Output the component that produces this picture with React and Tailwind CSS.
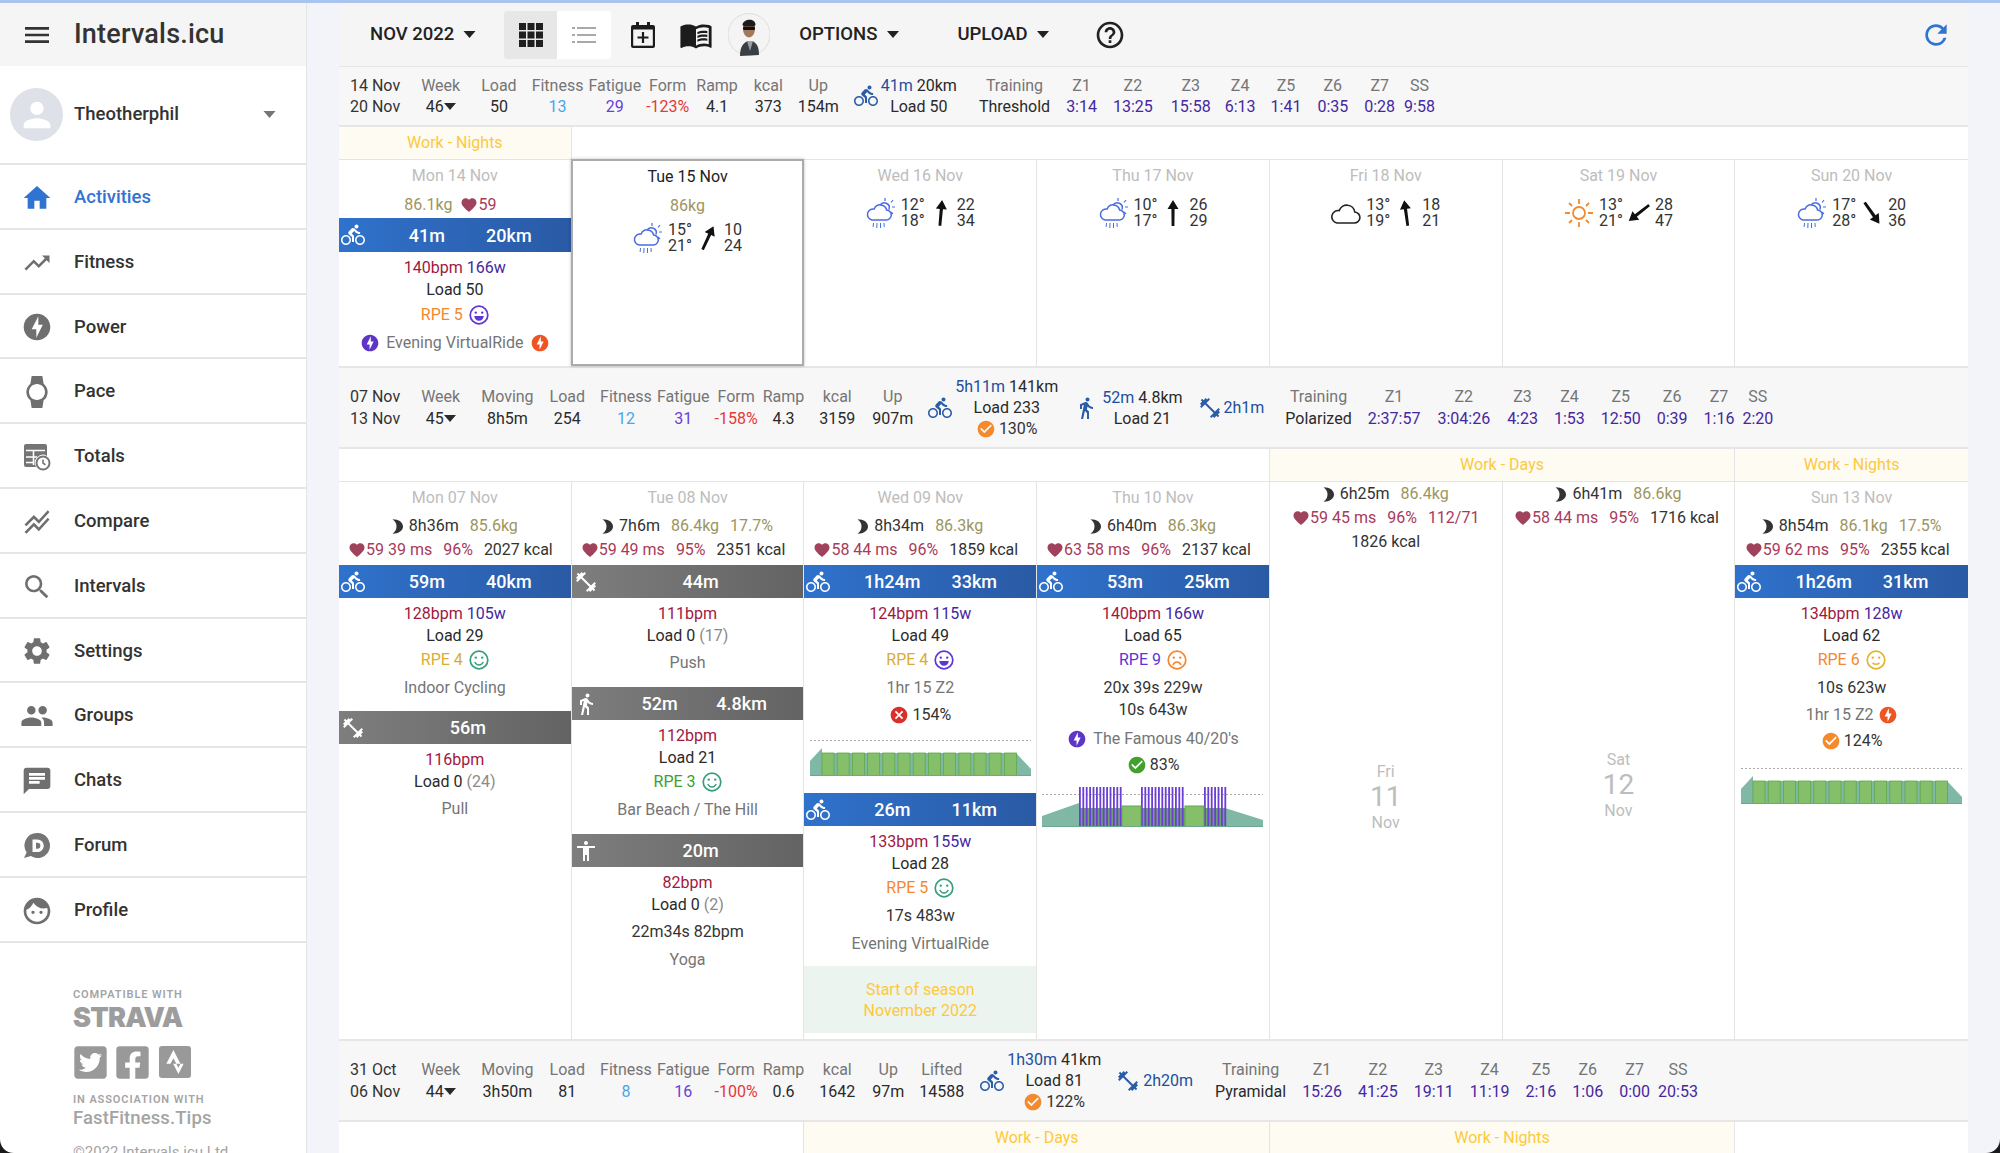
import React from 'react';
import {
  MdMenu, MdPerson, MdHome, MdTrendingUp, MdOfflineBolt, MdWatch, MdStackedLineChart, MdSearch, MdSettings,
  MdPeople, MdChat, MdFace, MdDirectionsBike, MdDirectionsWalk, MdFitnessCenter, MdAccessibility, MdFavorite,
  MdCheckCircle, MdCancel, MdMenuBook, MdHelpOutline, MdRefresh
} from 'react-icons/md';
import { FaTwitterSquare, FaFacebookSquare, FaStrava } from 'react-icons/fa';

const Caret = ({ className = '' }) => (
  <svg viewBox="0 0 12 7" className={className}><path d="M0 0h12L6 7z" fill="currentColor" /></svg>
);

const TotalsIcon = () => (
  <svg viewBox="0 0 28 28" className="w-[28px] h-[28px] text-[#757575]">
    <path d="M3 1h19a2 2 0 0 1 2 2v10a8 8 0 0 0-11 11H3a2 2 0 0 1-2-2V3a2 2 0 0 1 2-2z" fill="currentColor" />
    <path d="M3 7.5h19M3 14h11M3 19.5h8M10.5 8v14" stroke="#fff" strokeWidth="1.6" />
    <circle cx="20" cy="20" r="6.5" fill="none" stroke="currentColor" strokeWidth="2" />
    <path d="M20 16.5V20l2.5 1.8" fill="none" stroke="currentColor" strokeWidth="1.6" />
  </svg>
);

const ForumIcon = () => (
  <svg viewBox="0 0 28 28" className="w-[28px] h-[28px] text-[#757575]">
    <path d="M14.5 1a12.5 12.5 0 1 1-6.6 23.1L1 26l2.6-5.6A12.5 12.5 0 0 1 14.5 1z" fill="currentColor" />
    <path d="M9.5 7.5h5a6 6 0 0 1 0 12.6h-5zM13 10.8v6h1.4a3 3 0 0 0 0-6z" fill="#fff" fillRule="evenodd" />
  </svg>
);

const navItems = [
  { label: 'Activities', icon: <MdHome size={32} />, active: true },
  { label: 'Fitness', icon: <MdTrendingUp size={30} /> },
  { label: 'Power', icon: <MdOfflineBolt size={32} /> },
  { label: 'Pace', icon: <MdWatch size={32} /> },
  { label: 'Totals', icon: <TotalsIcon /> },
  { label: 'Compare', icon: <MdStackedLineChart size={30} /> },
  { label: 'Intervals', icon: <MdSearch size={32} /> },
  { label: 'Settings', icon: <MdSettings size={32} /> },
  { label: 'Groups', icon: <MdPeople size={34} /> },
  { label: 'Chats', icon: <MdChat size={32} /> },
  { label: 'Forum', icon: <ForumIcon /> },
  { label: 'Profile', icon: <MdFace size={32} /> }
];

const Sidebar = () => (
  <aside className="w-[307px] h-full bg-white shrink-0 border-r border-[#e4e4e4] flex flex-col overflow-hidden">
    <div className="h-[63px] shrink-0 bg-[#f5f5f5] flex items-center text-[#333]">
      <div className="w-[74px] flex justify-center"><MdMenu size={32} /></div>
      <span className="text-[27px] font-medium tracking-[0.2px]">Intervals.icu</span>
    </div>
    <div className="h-[99px] shrink-0 border-b-2 border-[#e5e5e5] flex items-center pl-[10px] pr-[30px]">
      <div className="w-[53px] h-[53px] rounded-full bg-[#dfe1e8] flex items-center justify-center text-white">
        <MdPerson size={40} />
      </div>
      <span className="ml-[11px] text-[18.5px] font-medium text-[#333]">Theotherphil</span>
      <Caret className="ml-auto w-[13px] h-[7px] text-[#757575]" />
    </div>
    {navItems.map((item) => (
      <div key={item.label} className="h-[64.8px] shrink-0 pt-[3px] border-b-2 border-[#e5e5e5] flex items-center">
        <div className={`w-[74px] flex justify-center ${item.active ? 'text-[#2f74d0]' : 'text-[#6f6f6f]'}`}>{item.icon}</div>
        <span className={`text-[18.5px] font-medium ${item.active ? 'text-[#3273d2]' : 'text-[#333]'}`}>{item.label}</span>
      </div>
    ))}
    <div className="shrink-0 pl-[73px] pt-[44px] text-[#a4a4a4]">
      <div className="h-[16px] leading-[16px] text-[11px] font-semibold tracking-[0.9px]">COMPATIBLE WITH</div>
      <div className="h-[26px] leading-[26px] text-[27px] font-['Inter',sans-serif] font-black tracking-[-0.8px] text-[#9d9d9d] mt-[2px]">STRAVA</div>
      <div className="flex mt-[13px] gap-[5px] text-[#999]">
        <FaTwitterSquare size={37} className="-ml-[1.5px]" />
        <FaFacebookSquare size={37} />
        <div className="w-[32px] h-[32px] mt-[2px] ml-[3.5px] rounded-[3px] bg-[#999] flex items-center justify-center text-white"><FaStrava size={24} /></div>
      </div>
      <div className="mt-[11px] h-[16px] leading-[16px] text-[11px] font-semibold tracking-[0.9px] whitespace-nowrap">IN ASSOCIATION WITH</div>
      <div className="h-[20px] leading-[20px] text-[18.5px] font-medium tracking-[0.1px] whitespace-nowrap">FastFitness.Tips</div>
      <div className="mt-[14px] text-[15px] leading-[20px] whitespace-nowrap">©2022 Intervals.icu Ltd</div>
    </div>
  </aside>
);

const Toolbar = () => (
  <div className="h-[63px] bg-[#f5f5f5] flex items-center pl-[31px] text-[#222]">
    <span className="text-[18.5px] font-medium">NOV 2022</span>
    <Caret className="ml-[9px] w-[13px] h-[7px]" />
    <div className="ml-[28px] flex">
      <div className="w-[53px] h-[48px] bg-[#e7e7e7] rounded-l-[3px] flex items-center justify-center">
        <svg viewBox="0 0 24 24" className="w-[24px] h-[24px]" fill="#1f1f1f">
          <rect x="0" y="0" width="7" height="7" /><rect x="8.5" y="0" width="7" height="7" /><rect x="17" y="0" width="7" height="7" />
          <rect x="0" y="8.5" width="7" height="7" /><rect x="8.5" y="8.5" width="7" height="7" /><rect x="17" y="8.5" width="7" height="7" />
          <rect x="0" y="17" width="7" height="7" /><rect x="8.5" y="17" width="7" height="7" /><rect x="17" y="17" width="7" height="7" />
        </svg>
      </div>
      <div className="w-[54px] h-[48px] bg-white rounded-r-[3px] flex items-center justify-center">
        <svg viewBox="0 0 24 18" className="w-[24px] h-[18px]" fill="#a9a9a9">
          <rect x="0" y="1" width="3" height="2" /><rect x="5" y="1" width="19" height="2" />
          <rect x="0" y="8" width="3" height="2" /><rect x="5" y="8" width="19" height="2" />
          <rect x="0" y="15" width="3" height="2" /><rect x="5" y="15" width="19" height="2" />
        </svg>
      </div>
    </div>
    <svg viewBox="0 0 24 26" className="ml-[20px] w-[24px] h-[26px]">
      <path d="M5 0h3v3h8V0h3v3h3a2 2 0 0 1 2 2v19a2 2 0 0 1-2 2H2a2 2 0 0 1-2-2V5a2 2 0 0 1 2-2h3z" fill="#1c1c1c" />
      <rect x="2.2" y="7.5" width="19.6" height="16.2" fill="#f5f5f5" />
      <path d="M12 10v11M6.5 15.5h11" stroke="#1c1c1c" strokeWidth="2.2" />
    </svg>
    <MdMenuBook size={34} className="ml-[24px] -mr-[2px] text-[#1c1c1c]" />
    <svg viewBox="0 0 42 43" className="ml-[17px] w-[42px] h-[43px]">
      <circle cx="21" cy="21.5" r="21" fill="#f4f4f4" stroke="#ddd" />
      <path d="M12 43c0-9 3-13 8-15l4 0c5 2 7 6 7 14z" fill="#3a3f44" />
      <path d="M19 28l3 10 3-10z" fill="#9aa0a5" />
      <ellipse cx="21" cy="16" rx="6" ry="8.5" fill="#a5785b" />
      <path d="M14.5 12c0-6 13-8 13 0l-1 1h-11z" fill="#1c1c1c" />
      <rect x="15" y="13.5" width="12" height="3.5" rx="1.2" fill="#111" />
    </svg>
    <span className="ml-[29px] text-[18.5px] font-medium">OPTIONS</span>
    <Caret className="ml-[10px] w-[12px] h-[7px]" />
    <span className="ml-[58px] text-[18.5px] font-medium">UPLOAD</span>
    <Caret className="ml-[9px] w-[12px] h-[7px]" />
    <MdHelpOutline size={32} className="ml-[45px]" />
    <MdRefresh size={32} className="ml-auto mr-[16px] text-[#2f74d0]" />
  </div>
);

const Stat = ({ label, value, color = 'text-[#2a2a2a]', className = '' }) => (
  <div className={`flex flex-col items-center whitespace-nowrap ${className}`}>
    <span className="h-[21.5px] leading-[21.5px] text-[#757575]">{label}</span>
    <span className={`h-[21.5px] leading-[21.5px] ${color}`}>{value}</span>
  </div>
);

const Dates = ({ from, to }) => (
  <div className="flex flex-col text-[#333] whitespace-nowrap">
    <span className="h-[21.5px] leading-[21.5px]">{from}</span>
    <span className="h-[21.5px] leading-[21.5px]">{to}</span>
  </div>
);

const WeekNo = ({ n }) => (
  <div className="ml-[21px] flex flex-col items-center">
    <span className="h-[21.5px] leading-[21.5px] text-[#757575]">Week</span>
    <span className="h-[21.5px] leading-[21.5px] text-[#2a2a2a] flex items-center">{n}<Caret className="w-[12px] h-[7px]" /></span>
  </div>
);

const ZoneStats = ({ name, nameGap, zones }) => (
  <>
    <Stat label="Training" value={name} className={nameGap} />
    {zones.map(([label, value, gap]) => (
      <Stat key={label} label={label} value={value} color="text-[#4527a0]" className={gap} />
    ))}
  </>
);

const Bike = ({ className = '' }) => <MdDirectionsBike size={24} className={`text-[#2a5ca8] ${className}`} />;
const Stretch = ({ className = '' }) => <MdFitnessCenter size={24} className={`text-[#2a5ca8] ${className}`} />;

const Badge = ({ type, className = '' }) => {
  if (type === 'orange') return <MdCheckCircle size={20} className={`text-[#f48a2c] ${className}`} />;
  if (type === 'green') return <MdCheckCircle size={20} className={`text-[#43a02e] ${className}`} />;
  return <MdCancel size={20} className={`text-[#d9302c] ${className}`} />;
};

const Week1 = () => (
  <div className="h-[58px] bg-[#f7f7f8] border-t border-[#e6e6e6] box-content flex items-center pl-[11px] text-[16px]">
    <Dates from="14 Nov" to="20 Nov" />
    <WeekNo n="46" />
    <Stat label="Load" value="50" className="ml-[21px]" />
    <Stat label="Fitness" value="13" color="text-[#4aa5e8]" className="ml-[15px]" />
    <Stat label="Fatigue" value="29" color="text-[#6a3fd6]" className="ml-[5px]" />
    <Stat label="Form" value="-123%" color="text-[#e53935]" className="ml-[5px]" />
    <Stat label="Ramp" value="4.1" className="ml-[7px]" />
    <Stat label="kcal" value="373" className="ml-[16px]" />
    <Stat label="Up" value="154m" className="ml-[15px]" />
    <Bike className="ml-[15px]" />
    <div className="ml-[3px] flex flex-col items-center whitespace-nowrap">
      <span className="h-[21.5px] leading-[21.5px]"><span className="text-[#1e4f9c]">41m</span> <span className="text-[#2a2a2a]">20km</span></span>
      <span className="h-[21.5px] leading-[21.5px] text-[#2a2a2a]">Load 50</span>
    </div>
    <ZoneStats
      name="Threshold"
      nameGap="ml-[22px]"
      zones={[
        ['Z1', '3:14', 'ml-[16px]'], ['Z2', '13:25', 'ml-[16px]'], ['Z3', '15:58', 'ml-[18px]'], ['Z4', '6:13', 'ml-[14px]'],
        ['Z5', '1:41', 'ml-[15px]'], ['Z6', '0:35', 'ml-[16px]'], ['Z7', '0:28', 'ml-[16px]'], ['SS', '9:58', 'ml-[9px]']
      ]}
    />
  </div>
);

const RideSummary = ({ time, dist, load, pct, className = '' }) => (
  <div className={`flex flex-col items-center whitespace-nowrap ${className}`}>
    <span className="h-[21px] leading-[21px]"><span className="text-[#1e4f9c]">{time}</span> <span className="text-[#2a2a2a]">{dist}</span></span>
    <span className="h-[21px] leading-[21px] text-[#2a2a2a]">{load}</span>
    {pct && <span className="h-[21px] flex items-center gap-[3px] text-[#333]"><Badge type="orange" />{pct}</span>}
  </div>
);

const Week2 = () => (
  <div className="h-[79px] bg-[#f7f7f8] border-t-2 border-[#e6e6e6] box-content flex items-center pl-[11px] text-[16px]">
    <Dates from="07 Nov" to="13 Nov" />
    <WeekNo n="45" />
    <Stat label="Moving" value="8h5m" className="ml-[21px]" />
    <Stat label="Load" value="254" className="ml-[16px]" />
    <Stat label="Fitness" value="12" color="text-[#4aa5e8]" className="ml-[15px]" />
    <Stat label="Fatigue" value="31" color="text-[#6a3fd6]" className="ml-[5px]" />
    <Stat label="Form" value="-158%" color="text-[#e53935]" className="ml-[5px]" />
    <Stat label="Ramp" value="4.3" className="ml-[5px]" />
    <Stat label="kcal" value="3159" className="ml-[15px]" />
    <Stat label="Up" value="907m" className="ml-[17px]" />
    <Bike className="ml-[15px]" />
    <RideSummary time="5h11m" dist="141km" load="Load 233" pct="130%" className="ml-[3px]" />
    <MdDirectionsWalk size={24} className="ml-[16px] text-[#2a5ca8]" />
    <RideSummary time="52m" dist="4.8km" load="Load 21" className="ml-[4px]" />
    <Stretch className="ml-[15px]" />
    <span className="ml-[2px] text-[#1e4f9c]">2h1m</span>
    <ZoneStats
      name="Polarized"
      nameGap="ml-[21px]"
      zones={[
        ['Z1', '2:37:57', 'ml-[16px]'], ['Z2', '3:04:26', 'ml-[17px]'], ['Z3', '4:23', 'ml-[17px]'], ['Z4', '1:53', 'ml-[16px]'],
        ['Z5', '12:50', 'ml-[16px]'], ['Z6', '0:39', 'ml-[16px]'], ['Z7', '1:16', 'ml-[16px]'], ['SS', '2:20', 'ml-[8px]']
      ]}
    />
  </div>
);

const Week3 = () => (
  <div className="h-[79px] bg-[#f7f7f8] border-t-2 border-[#e6e6e6] box-content flex items-center pl-[11px] text-[16px]">
    <Dates from="31 Oct" to="06 Nov" />
    <WeekNo n="44" />
    <Stat label="Moving" value="3h50m" className="ml-[21px]" />
    <Stat label="Load" value="81" className="ml-[16px]" />
    <Stat label="Fitness" value="8" color="text-[#4aa5e8]" className="ml-[15px]" />
    <Stat label="Fatigue" value="16" color="text-[#6a3fd6]" className="ml-[5px]" />
    <Stat label="Form" value="-100%" color="text-[#e53935]" className="ml-[5px]" />
    <Stat label="Ramp" value="0.6" className="ml-[5px]" />
    <Stat label="kcal" value="1642" className="ml-[15px]" />
    <Stat label="Up" value="97m" className="ml-[17px]" />
    <Stat label="Lifted" value="14588" className="ml-[15px]" />
    <Bike className="ml-[16px]" />
    <RideSummary time="1h30m" dist="41km" load="Load 81" pct="122%" className="ml-[3px]" />
    <Stretch className="ml-[15px]" />
    <span className="ml-[3px] text-[#1e4f9c]">2h20m</span>
    <ZoneStats
      name="Pyramidal"
      nameGap="ml-[22px]"
      zones={[
        ['Z1', '15:26', 'ml-[16px]'], ['Z2', '41:25', 'ml-[16px]'], ['Z3', '19:11', 'ml-[16px]'], ['Z4', '11:19', 'ml-[16px]'],
        ['Z5', '2:16', 'ml-[16px]'], ['Z6', '1:06', 'ml-[16px]'], ['Z7', '0:00', 'ml-[16px]'], ['SS', '20:53', 'ml-[8px]']
      ]}
    />
  </div>
);

const Phase = ({ text, className = '' }) => (
  <div className={`h-[32px] flex items-center justify-center border-r border-[#e4e4e4] ${text ? 'bg-[#fefbf3] text-[#fdc93b]' : ''} ${className}`}>{text}</div>
);

const Line = ({ className = 'h-[28px]', children }) => (
  <div className={`flex items-center justify-center whitespace-nowrap text-[16px] ${className}`}>{children}</div>
);

const DayHead = ({ text, dark }) => (
  <div className={`h-[32px] flex items-center justify-center text-[16px] ${dark ? 'text-[#222]' : 'text-[#bdbdbd]'}`}>{text}</div>
);

const Moon = () => (
  <svg viewBox="0 0 11 15" className="w-[11px] h-[15px]"><path d="M0.5 0.3C7 0.3 11 3.5 11 7.5S7 14.7 0.5 14.7C3.5 12.5 4.5 10 4.5 7.5S3.5 2.5 0.5 0.3z" fill="#333" /></svg>
);

const Sleep = ({ time, kg, pct, className = 'h-[24px]' }) => (
  <Line className={className}>
    <Moon />
    <span className="ml-[6px] text-[#333]">{time}</span>
    <span className="ml-[11px] text-[#9c955f]">{kg}</span>
    {pct && <span className="ml-[11px] text-[#9c955f]">{pct}</span>}
  </Line>
);

const Hrv = ({ hr, ms, pct, bp, kcal, className = 'h-[24px] pr-[9px]' }) => (
  <Line className={className}>
    <MdFavorite size={18} className="text-[#a0425c]" />
    <span className="text-[#a83b5a]">{hr} {ms}</span>
    <span className="ml-[11px] text-[#a83b5a]">{pct}</span>
    {bp && <span className="ml-[11px] text-[#a83b5a]">{bp}</span>}
    {kcal && <span className="ml-[11px] text-[#333]">{kcal}</span>}
  </Line>
);

const barKinds = {
  ride: { bg: 'bg-gradient-to-r from-[#2f72cc] to-[#2a5aa5]', icon: <MdDirectionsBike size={26} /> },
  gym: { bg: 'bg-gradient-to-r from-[#7e7e7e] to-[#636363]', icon: <MdFitnessCenter size={24} /> },
  walk: { bg: 'bg-gradient-to-r from-[#7e7e7e] to-[#636363]', icon: <MdDirectionsWalk size={24} /> },
  yoga: { bg: 'bg-gradient-to-r from-[#7e7e7e] to-[#636363]', icon: <MdAccessibility size={24} /> }
};

const ActivityBar = ({ kind, a, b, className = '' }) => (
  <div className={`h-[33px] flex items-center pl-[2px] text-white text-[18px] font-medium ${barKinds[kind].bg} ${className}`}>
    <span className="w-[24px] shrink-0 flex justify-center">{barKinds[kind].icon}</span>
    <div className="flex-1 flex justify-center">
      <span className="w-[82px] text-center">{a}</span>
      {b && <span className="w-[82px] text-center">{b}</span>}
    </div>
  </div>
);

const Metrics = ({ bpm, w, load, extra, className = 'pt-[5px]' }) => (
  <div className={className}>
    <Line className="h-[22px]">
      <span className="text-[#a0183f]">{bpm}</span>
      {w && <span className="ml-[4px] text-[#4527a0]">{w}</span>}
    </Line>
    <Line className="h-[21px] text-[#2a2a2a]">{load}{extra && <span className="ml-[4px] text-[#8a8a8a]">{extra}</span>}</Line>
  </div>
);

const Face = ({ mood, color }) => (
  <svg viewBox="0 0 20 20" className={`w-[20px] h-[20px] ml-[6px] ${color}`}>
    <circle cx="10" cy="10" r="8.8" fill="none" stroke="currentColor" strokeWidth="1.7" />
    <circle cx="6.8" cy="7.6" r="1.2" fill="currentColor" />
    <circle cx="13.2" cy="7.6" r="1.2" fill="currentColor" />
    {mood === 'laugh' && <path d="M5.2 11h9.6c-.4 3-2.3 4.8-4.8 4.8S5.6 14 5.2 11z" fill="currentColor" />}
    {mood === 'smile' && <path d="M5.8 12c1 2 2.4 3 4.2 3s3.2-1 4.2-3" fill="none" stroke="currentColor" strokeWidth="1.5" />}
    {mood === 'neutral' && <path d="M6.5 12.8c1.2 1 2.3 1.4 3.5 1.4s2.3-.4 3.5-1.4" fill="none" stroke="currentColor" strokeWidth="1.5" />}
    {mood === 'sad' && <path d="M5.8 15c1-2 2.4-3 4.2-3s3.2 1 4.2 3" fill="none" stroke="currentColor" strokeWidth="1.5" />}
  </svg>
);

const Rpe = ({ n, color, mood, faceColor, className = 'h-[28px]' }) => (
  <Line className={className}>
    <span className={color}>RPE {n}</span>
    <Face mood={mood} color={faceColor} />
  </Line>
);

const Note = ({ children, gray, className = 'h-[28px]' }) => (
  <Line className={`${className} ${gray ? 'text-[#757575]' : 'text-[#333]'}`}>{children}</Line>
);

const Bolt = ({ color }) => <MdOfflineBolt size={20} className={color} />;

const RainCloud = () => (
  <svg viewBox="0 0 30 32" className="w-[30px] h-[32px] text-[#4a6ce0]" fill="none" stroke="currentColor">
    <path d="M6 23h14a5 5 0 0 0 .6-10 6.5 6.5 0 0 0-12.4-1A5.5 5.5 0 0 0 6 23z" strokeWidth="1.5" />
    <path d="M14 8.2a5 5 0 0 1 9 4.2" strokeWidth="1.5" />
    <path d="M19 1v3M27 3l-2 2.5M29 10h-3M27 17l-2-2" strokeWidth="1.2" />
    <path d="M7.5 26l-.4 4M11 26l-.2 5M14.5 26v5M18 26l.2 4" strokeWidth="1" />
  </svg>
);

const Cloud = () => (
  <svg viewBox="0 0 30 24" className="w-[30px] h-[24px]" fill="none" stroke="#222" strokeWidth="1.6">
    <path d="M6 22h17a5.5 5.5 0 0 0 .8-11A8 8 0 0 0 8.3 9.6 6.2 6.2 0 0 0 6 22z" />
  </svg>
);

const Sun = () => (
  <svg viewBox="0 0 30 30" className="w-[30px] h-[30px]" fill="none" stroke="#f5892e">
    <circle cx="15" cy="15" r="6" strokeWidth="1.8" />
    <path d="M15 1v5M15 24v5M1 15h5M24 15h5M5 5l3 3M22 22l3 3M5 25l3-3M22 8l3-3" strokeWidth="1.8" />
  </svg>
);

const Weather = ({ icon, t1, t2, rot, w1, w2, className = '' }) => (
  <div className={`flex items-center justify-center text-[16px] leading-[16px] text-[#333] ${className}`}>
    {icon}
    <div className="ml-[5px] flex flex-col"><span>{t1}</span><span>{t2}</span></div>
    <svg viewBox="0 0 14 26" className={`ml-[9px] w-[14px] h-[26px] ${rot}`}>
      <path d="M7 0l5.5 9H8.6L8.4 26H5.6L5.4 9H1.5z" fill="#111" />
    </svg>
    <div className="ml-[9px] flex flex-col"><span>{w1}</span><span>{w2}</span></div>
  </div>
);

// steady ride: ramp up, 13 green blocks, ramp down
const SteadyChart = ({ className = '' }) => (
  <svg viewBox="0 0 221 36" className={`w-[221px] h-[36px] mx-auto ${className}`}>
    <path d="M0 .5h221" stroke="#aaa" strokeDasharray="2 2" />
    <path d="M0 36V21L12 8V13H206L221 29V36z" fill="#7fb8a4" />
    {Array.from({ length: 13 }).map((_, i) => (
      <rect key={i} x={12 + i * 15.2} y="13" width="12" height="23" fill="#85bf6a" stroke="#5fa94c" strokeWidth="0.8" />
    ))}
    <path d="M0 35.5h221" stroke="#6aa88f" />
  </svg>
);

const stripes = (from, to) => {
  const out = [];
  for (let x = from; x < to; x += 3.4) out.push(x);
  return out;
};

const IntervalChart = ({ className = '' }) => (
  <svg viewBox="0 0 221 40" className={`w-[221px] h-[40px] mx-auto ${className}`}>
    <path d="M0 7.5h221" stroke="#aaa" strokeDasharray="2 2" />
    <path d="M0 40V29L37 16V40zM183 21L221 33V40H183z" fill="#7fb8a4" />
    {[[37, 80], [99, 143], [162, 183]].map(([a, b]) => (
      <g key={a}>
        <rect x={a} y="21" width={b - a} height="19" fill="#6f9f74" />
        {stripes(a, b).map((x) => <rect key={x} x={x} y="0" width="1.8" height="40" fill="#6b3fd4" />)}
      </g>
    ))}
    <rect x="80" y="19" width="19" height="21" fill="#85bf6a" stroke="#5fa94c" />
    <rect x="143" y="19" width="19" height="21" fill="#85bf6a" stroke="#5fa94c" />
    <path d="M0 39.5h221" stroke="#6aa88f" />
  </svg>
);

const Cell = ({ className = '', children }) => (
  <div className={`min-w-0 border-r border-[#e4e4e4] ${className}`}>{children}</div>
);

const WeekOneDays = () => (
  <div className="grid grid-cols-7 h-[206px] bg-white">
    <Cell>
      <DayHead text="Mon 14 Nov" />
      <Line className="h-[26px] pr-[9px]"><span className="text-[#9c955f]">86.1kg</span><MdFavorite size={18} className="ml-[8px] text-[#a0425c]" /><span className="text-[#a83b5a]">59</span></Line>
      <ActivityBar kind="ride" a="41m" b="20km" className="h-[34px]" />
      <Metrics bpm="140bpm" w="166w" load="Load 50" />
      <Rpe n="5" color="text-[#f5882f]" mood="laugh" faceColor="text-[#5e35d6]" className="h-[28px] mt-[1px]" />
      <Note gray><Bolt color="text-[#5e35c9]" /><span className="mx-[6px]">Evening VirtualRide</span><Bolt color="text-[#ee5522]" /></Note>
    </Cell>
    <div className="min-w-0 -ml-[1px] border-2 border-[#ababab] shadow-[0_0_3px_rgba(0,0,0,0.25)] bg-white -mt-[1px]">
      <DayHead text="Tue 15 Nov" dark />
      <Line className="h-[26px] text-[#9c955f]">86kg</Line>
      <Weather icon={<RainCloud />} t1="15°" t2="21°" rot="rotate-[25deg]" w1="10" w2="24" className="mt-[3px]" />
    </div>
    <Cell>
      <DayHead text="Wed 16 Nov" />
      <Weather icon={<RainCloud />} t1="12°" t2="18°" rot="rotate-[5deg]" w1="22" w2="34" className="mt-[5px]" />
    </Cell>
    <Cell>
      <DayHead text="Thu 17 Nov" />
      <Weather icon={<RainCloud />} t1="10°" t2="17°" rot="" w1="26" w2="29" className="mt-[5px]" />
    </Cell>
    <Cell>
      <DayHead text="Fri 18 Nov" />
      <Weather icon={<Cloud />} t1="13°" t2="19°" rot="-rotate-[8deg]" w1="18" w2="21" className="mt-[5px]" />
    </Cell>
    <Cell>
      <DayHead text="Sat 19 Nov" />
      <Weather icon={<Sun />} t1="13°" t2="21°" rot="rotate-[232deg]" w1="28" w2="47" className="mt-[5px]" />
    </Cell>
    <Cell className="border-r-0">
      <DayHead text="Sun 20 Nov" />
      <Weather icon={<RainCloud />} t1="17°" t2="28°" rot="rotate-[145deg]" w1="20" w2="36" className="mt-[5px]" />
    </Cell>
  </div>
);

const WeekTwoDays = () => (
  <div className="grid grid-cols-7 h-[557px] bg-white">
    <Cell>
      <DayHead text="Mon 07 Nov" />
      <Sleep time="8h36m" kg="85.6kg" className="h-[24px]" />
      <Hrv hr="59" ms="39 ms" pct="96%" kcal="2027 kcal" />
      <div className="h-[3px]" />
      <ActivityBar kind="ride" a="59m" b="40km" />
      <Metrics bpm="128bpm" w="105w" load="Load 29" />
      <Rpe n="4" color="text-[#d9ad33]" mood="smile" faceColor="text-[#3a9e7c]" />
      <Note gray>Indoor Cycling</Note>
      <ActivityBar kind="gym" a="56m" className="mt-[9px]" />
      <Metrics bpm="116bpm" load="Load 0" extra="(24)" />
      <Note gray className="h-[28px] mt-[3px]">Pull</Note>
    </Cell>
    <Cell>
      <DayHead text="Tue 08 Nov" />
      <Sleep time="7h6m" kg="86.4kg" pct="17.7%" />
      <Hrv hr="59" ms="49 ms" pct="95%" kcal="2351 kcal" />
      <div className="h-[3px]" />
      <ActivityBar kind="gym" a="44m" />
      <Metrics bpm="111bpm" load="Load 0" extra="(17)" />
      <Note gray className="h-[28px] mt-[3px]">Push</Note>
      <ActivityBar kind="walk" a="52m" b="4.8km" className="mt-[10px]" />
      <Metrics bpm="112bpm" load="Load 21" />
      <Rpe n="3" color="text-[#3ea02c]" mood="smile" faceColor="text-[#3a9e7c]" />
      <Note gray>Bar Beach / The Hill</Note>
      <ActivityBar kind="yoga" a="20m" className="mt-[10px]" />
      <Metrics bpm="82bpm" load="Load 0" extra="(2)" />
      <Note className="h-[28px] mt-[3px]">22m34s 82bpm</Note>
      <Note gray>Yoga</Note>
    </Cell>
    <Cell>
      <DayHead text="Wed 09 Nov" />
      <Sleep time="8h34m" kg="86.3kg" />
      <Hrv hr="58" ms="44 ms" pct="96%" kcal="1859 kcal" />
      <div className="h-[3px]" />
      <ActivityBar kind="ride" a="1h24m" b="33km" />
      <Metrics bpm="124bpm" w="115w" load="Load 49" />
      <Rpe n="4" color="text-[#d9ad33]" mood="laugh" faceColor="text-[#5e35d6]" />
      <Note gray>1hr 15 Z2</Note>
      <Note className="h-[26px]"><Badge type="red" className="mr-[3px]" />154%</Note>
      <SteadyChart className="mt-[12px]" />
      <ActivityBar kind="ride" a="26m" b="11km" className="mt-[17px]" />
      <Metrics bpm="133bpm" w="155w" load="Load 28" />
      <Rpe n="5" color="text-[#f5882f]" mood="smile" faceColor="text-[#3a9e7c]" />
      <Note>17s 483w</Note>
      <Note gray>Evening VirtualRide</Note>
      <div className="mt-[8px] h-[67px] bg-[#ecf4f0] flex flex-col items-center justify-center text-[16px] leading-[21px] text-[#fdc93b]">
        <span>Start of season</span>
        <span>November 2022</span>
      </div>
    </Cell>
    <Cell>
      <DayHead text="Thu 10 Nov" />
      <Sleep time="6h40m" kg="86.3kg" />
      <Hrv hr="63" ms="58 ms" pct="96%" kcal="2137 kcal" />
      <div className="h-[3px]" />
      <ActivityBar kind="ride" a="53m" b="25km" />
      <Metrics bpm="140bpm" w="166w" load="Load 65" />
      <Rpe n="9" color="text-[#5e35d6]" mood="sad" faceColor="text-[#f5882f]" />
      <Note>20x 39s 229w</Note>
      <Note className="h-[22px] -mt-[3px]">10s 643w</Note>
      <Note gray className="h-[28px] mt-[4px]"><Bolt color="text-[#5e35c9]" /><span className="ml-[6px]">The Famous 40/20's</span></Note>
      <Note className="h-[24px]"><Badge type="green" className="mr-[3px]" />83%</Note>
      <IntervalChart className="mt-[10px]" />
    </Cell>
    <Cell>
      <Sleep time="6h25m" kg="86.4kg" />
      <Hrv hr="59" ms="45 ms" pct="96%" bp="112/71" className="h-[24px]" />
      <Note className="h-[24px]">1826 kcal</Note>
      <Line className="h-[24px] mt-[206px] text-[#bdbdbd]">Fri</Line>
      <Line className="h-[30px] -mt-[2px] text-[28px] text-[#bdbdbd]">11</Line>
      <Line className="h-[22px] text-[#bdbdbd]">Nov</Line>
    </Cell>
    <Cell>
      <Sleep time="6h41m" kg="86.6kg" />
      <Hrv hr="58" ms="44 ms" pct="95%" kcal="1716 kcal" className="h-[24px] pr-[4px]" />
      <Line className="h-[24px] mt-[218px] text-[#bdbdbd]">Sat</Line>
      <Line className="h-[30px] -mt-[2px] text-[28px] text-[#bdbdbd]">12</Line>
      <Line className="h-[22px] text-[#bdbdbd]">Nov</Line>
    </Cell>
    <Cell className="border-r-0">
      <DayHead text="Sun 13 Nov" />
      <Sleep time="8h54m" kg="86.1kg" pct="17.5%" />
      <Hrv hr="59" ms="62 ms" pct="95%" kcal="2355 kcal" />
      <div className="h-[3px]" />
      <ActivityBar kind="ride" a="1h26m" b="31km" />
      <Metrics bpm="134bpm" w="128w" load="Load 62" />
      <Rpe n="6" color="text-[#f5882f]" mood="neutral" faceColor="text-[#e3b52e]" />
      <Note>10s 623w</Note>
      <Note gray className="h-[26px]">1hr 15 Z2<Bolt color="ml-[4px] text-[#ee5522]" /></Note>
      <Note className="h-[26px]"><Badge type="orange" className="mr-[3px]" />124%</Note>
      <SteadyChart className="mt-[14px]" />
    </Cell>
  </div>
);

const Divider = () => <div className="h-[1px] bg-[#e4e4e4]" />;

export default function App() {
  return (
    <div className="relative w-[2000px] h-[1153px] overflow-hidden bg-[#f3f4fa] font-['Roboto',sans-serif] text-[16px]">
      <div className="h-[3px] bg-[#a9c4ee]" />
      <div className="flex h-[1150px]">
        <Sidebar />
        <main className="ml-[32px] w-[1629px] h-full bg-white">
          <Toolbar />
          <Week1 />
          <div className="border-t-2 border-[#e6e6e6] grid grid-cols-7 bg-white">
            <Phase text="Work - Nights" />
            <Phase className="col-span-6 border-r-0" />
          </div>
          <Divider />
          <WeekOneDays />
          <Week2 />
          <div className="border-t-2 border-[#e6e6e6] grid grid-cols-7 bg-white">
            <Phase className="col-span-4" />
            <Phase text="Work - Days" className="col-span-2" />
            <Phase text="Work - Nights" className="border-r-0" />
          </div>
          <Divider />
          <WeekTwoDays />
          <Week3 />
          <div className="border-t-2 border-[#e6e6e6] grid grid-cols-7 bg-white">
            <Phase className="col-span-2" />
            <Phase text="Work - Days" className="col-span-2" />
            <Phase text="Work - Nights" className="col-span-2" />
            <Phase className="border-r-0" />
          </div>
        </main>
      </div>
      {/* window corners of the screenshot */}
      <svg viewBox="0 0 14 14" className="absolute left-0 bottom-0 w-[14px] h-[14px]"><path d="M0 0C0 8 6 14 14 14H0z" fill="#1a1a1a" /></svg>
      <svg viewBox="0 0 14 14" className="absolute right-0 bottom-0 w-[14px] h-[14px]"><path d="M14 0C14 8 8 14 0 14H14z" fill="#1a1a1a" /></svg>
    </div>
  );
}
